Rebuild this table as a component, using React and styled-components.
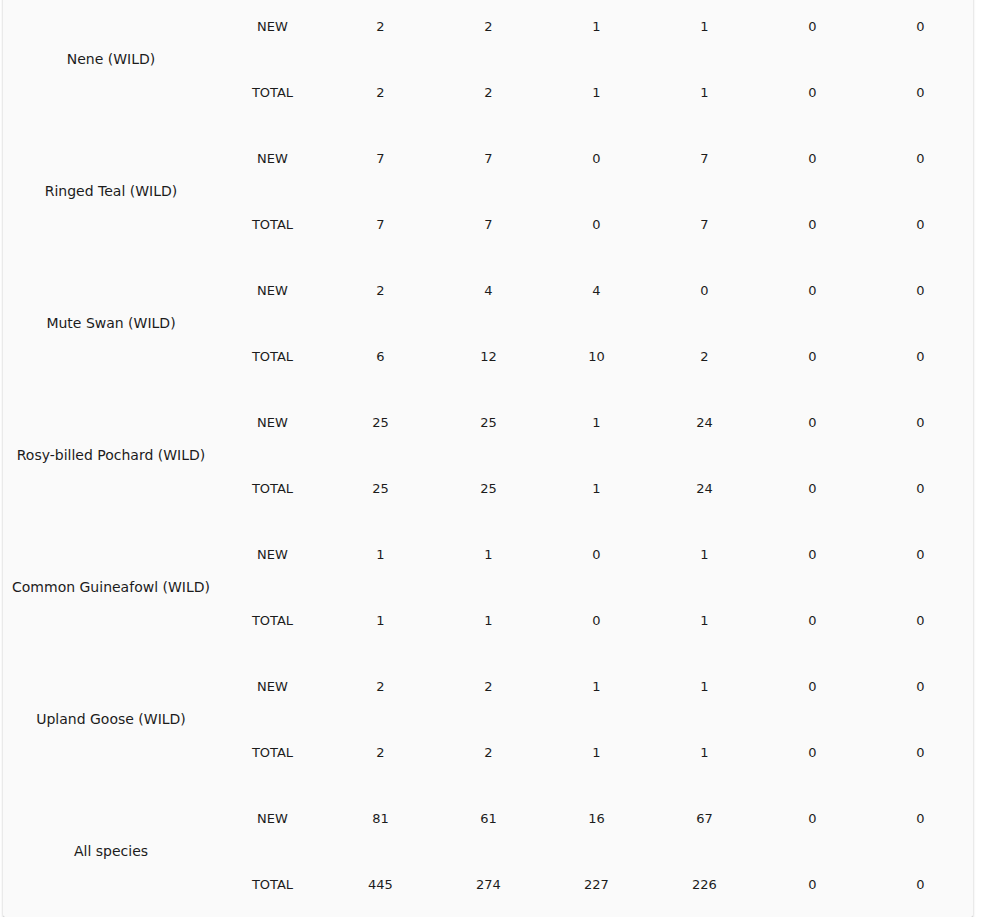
import React from 'react';
import styled, { createGlobalStyle } from 'styled-components';

const GlobalStyle = createGlobalStyle`
  html, body {
    margin: 0;
    padding: 0;
    background: #ffffff;
    overflow: hidden;
  }
`

const Page = styled.div`
  padding: 0 11px 0 3px;
  margin-top: -7px;
`
const Card = styled.div`
  background-color: #fafafa;
  box-shadow: 0 1px 3px rgba(0, 0, 0, 0.2), 0 1px 1px rgba(0, 0, 0, 0.14), 0 2px 1px -1px rgba(0, 0, 0, 0.12);
  border-radius: 0 0 2px 2px;
`
const Table = styled.table`
  width: 100%;
  border-collapse: collapse;
  table-layout: fixed;
  font-family: "DejaVu Sans", "Open Sans", sans-serif;
  font-size: 13px;
  color: #1c1c1c;
`
const Cell = styled.td`
  height: 66px;
  padding: 0 0 0 3px;
  text-align: center;
  vertical-align: middle;
  box-sizing: border-box;
`
const SpeciesCell = styled(Cell)`
  padding: 0 0 0 2px;
  font-size: 14px;
`

const rows = [
  { name: 'Nene (WILD)', fresh: [2, 2, 1, 1, 0, 0], total: [2, 2, 1, 1, 0, 0] },
  { name: 'Ringed Teal (WILD)', fresh: [7, 7, 0, 7, 0, 0], total: [7, 7, 0, 7, 0, 0] },
  { name: 'Mute Swan (WILD)', fresh: [2, 4, 4, 0, 0, 0], total: [6, 12, 10, 2, 0, 0] },
  { name: 'Rosy-billed Pochard (WILD)', fresh: [25, 25, 1, 24, 0, 0], total: [25, 25, 1, 24, 0, 0] },
  { name: 'Common Guineafowl (WILD)', fresh: [1, 1, 0, 1, 0, 0], total: [1, 1, 0, 1, 0, 0] },
  { name: 'Upland Goose (WILD)', fresh: [2, 2, 1, 1, 0, 0], total: [2, 2, 1, 1, 0, 0] },
  { name: 'All species', fresh: [81, 61, 16, 67, 0, 0], total: [445, 274, 227, 226, 0, 0] },
];

const App = function() {
  return (
    <>
      <GlobalStyle />
      <Page>
        <Card>
          <Table>
            <colgroup>
              <col style={{ width: 214 }} />
              <col /><col /><col /><col /><col /><col /><col />
            </colgroup>
            <tbody>
              {rows.map(row => (
                <React.Fragment key={row.name}>
                  <tr>
                    <SpeciesCell rowSpan={2}>{row.name}</SpeciesCell>
                    <Cell>NEW</Cell>
                    {row.fresh.map((n, i) => <Cell key={i}>{n}</Cell>)}
                  </tr>
                  <tr>
                    <Cell>TOTAL</Cell>
                    {row.total.map((n, i) => <Cell key={i}>{n}</Cell>)}
                  </tr>
                </React.Fragment>
              ))}
            </tbody>
          </Table>
        </Card>
      </Page>
    </>
  );
};

export default App;
